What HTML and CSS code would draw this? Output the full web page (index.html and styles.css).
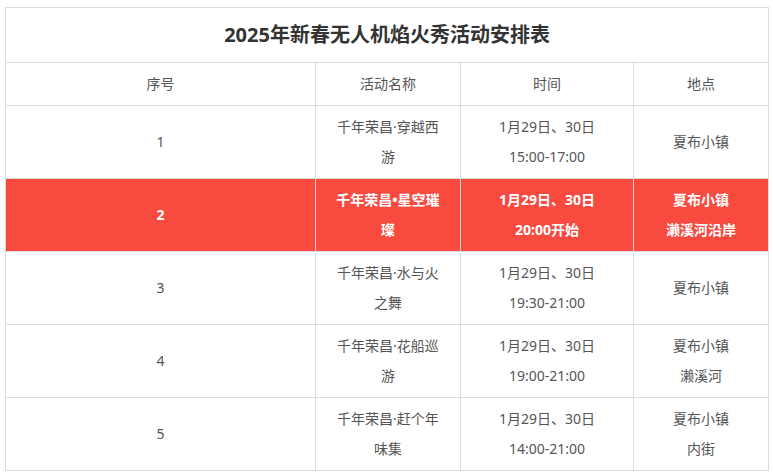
FILE: index.html
```html
<!DOCTYPE html>
<html lang="zh-CN">
<head>
<meta charset="utf-8">
<link rel="stylesheet" href="styles.css">
</head>
<body>
<div class="wrap">
<table class="sched">
  <colgroup>
    <col class="c1"><col class="c2"><col class="c3"><col class="c4">
  </colgroup>
  <tr class="title-row"><td colspan="4" class="title">2025年新春无人机焰火秀活动安排表</td></tr>
  <tr class="head-row"><td>序号</td><td>活动名称</td><td>时间</td><td>地点</td></tr>
  <tr class="row"><td>1</td><td>千年荣昌·穿越西游</td><td>1月29日、30日<br>15:00-17:00</td><td>夏布小镇</td></tr>
  <tr class="row hl"><td>2</td><td>千年荣昌•星空璀璨</td><td>1月29日、30日<br>20:00开始</td><td>夏布小镇<br>濑溪河沿岸</td></tr>
  <tr class="row"><td>3</td><td>千年荣昌·水与火之舞</td><td>1月29日、30日<br>19:30-21:00</td><td>夏布小镇</td></tr>
  <tr class="row"><td>4</td><td>千年荣昌·花船巡游</td><td>1月29日、30日<br>19:00-21:00</td><td>夏布小镇<br>濑溪河</td></tr>
  <tr class="row"><td>5</td><td>千年荣昌·赶个年味集</td><td>1月29日、30日<br>14:00-21:00</td><td>夏布小镇<br>内街</td></tr>
</table>
</div>
</body>
</html>
```
FILE: styles.css
```css
html, body {
  margin: 0;
  padding: 0;
  background: #fff;
}
.wrap {
  padding: 7px 0 0 5px;
}
.sched {
  border-collapse: collapse;
  table-layout: fixed;
  width: 763px;
  font-family: "Noto Sans", "Noto Sans CJK SC", sans-serif;
  font-size: 14px;
  color: #555;
}
.c1 { width: 310px; }
.c2 { width: 145px; }
.c3 { width: 173px; }
.c4 { width: 135px; }
.sched td {
  border: 1px solid #dcdcdc;
  text-align: center;
  vertical-align: middle;
  line-height: 30px;
  padding: 0 15px;
  word-break: break-all;
}
.title-row td {
  height: 54px;
  font-size: 20px;
  font-weight: bold;
  color: #333;
  line-height: 26px;
}
.head-row td {
  height: 42px;
}
.row td {
  height: 72px;
}
.row.hl td {
  background: #f84a3f;
  color: #fff;
  font-weight: bold;
}
```
